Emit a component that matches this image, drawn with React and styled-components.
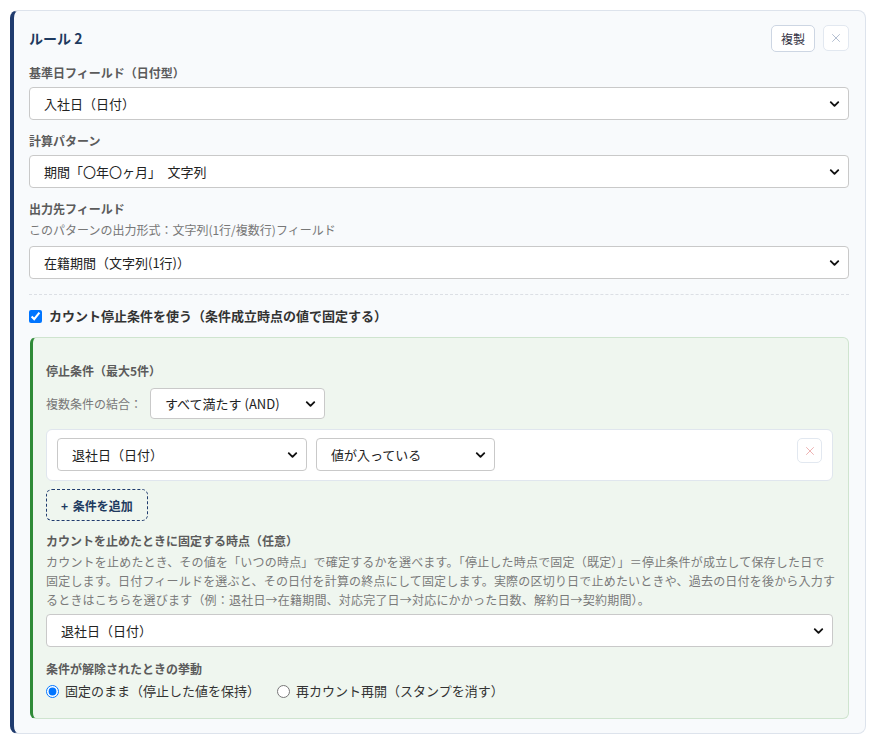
import React from "react";
import styled, { createGlobalStyle } from "styled-components";
import { X, ChevronDown } from "lucide-react";

const GlobalStyle = createGlobalStyle`
  *, *::before, *::after { box-sizing: border-box; }
  body {
    margin: 0;
    background: #ffffff;
    font-family: "Noto Sans CJK JP", "Noto Sans", sans-serif;
    color: #222;
  }
`;

const Page = styled.div`
  padding: 10px;
`;

const RuleCard = styled.section`
  width: 856px;
  background: #f8fafc;
  border: 1px solid #dde3ec;
  border-left: 4px solid #1f3b6e;
  border-radius: 8px;
  padding: 14px 16px 14px 15px;
`;

const Header = styled.div`
  display: flex;
  align-items: center;
  justify-content: space-between;
  height: 27px;
`;

const Title = styled.h3`
  margin: -2px 0 0;
  font-size: 14px;
  font-weight: 700;
  color: #1e3a5f;
`;

const Actions = styled.div`
  display: flex;
  gap: 8px;
`;

const SmallButton = styled.button`
  height: 27px;
  padding: 0 9px;
  background: #fff;
  border: 1px solid #cdd6e3;
  border-radius: 5px;
  font-family: inherit;
  font-size: 12px;
  color: #334;
`;

const IconButton = styled.button`
  width: ${({ size }) => size || 26}px;
  height: ${({ size }) => size || 26}px;
  padding: 0;
  display: flex;
  align-items: center;
  justify-content: center;
  background: #fff;
  border: 1px solid #e2e8f0;
  border-radius: 5px;
  color: ${({ tone }) => tone || "#a3b0c6"};
`;

const Field = styled.div`
  margin-top: ${({ gap }) => gap ?? 12}px;
`;

const Label = styled.div`
  font-size: 12px;
  font-weight: 700;
  color: #5b5b5b;
  line-height: 18px;
  margin-bottom: 5px;
`;

const Hint = styled.div`
  font-size: 12px;
  color: #777;
  line-height: 18px;
  margin-top: -2px;
  margin-bottom: 7px;
`;

const SelectWrap = styled.div`
  position: relative;
  width: ${({ w }) => (w ? `${w}px` : "100%")};
  flex: none;

  svg {
    position: absolute;
    right: 7px;
    top: 50%;
    transform: translateY(-50%);
    pointer-events: none;
    color: #111;
  }
`;

const NativeSelect = styled.select`
  display: block;
  width: 100%;
  height: ${({ h }) => h || 33}px;
  padding: 0 30px 0 14px;
  appearance: none;
  background: #fff;
  border: 1px solid #c9c9c9;
  border-radius: 4px;
  font-family: inherit;
  font-size: 13px;
  color: #222;
`;

const Select = ({ w, h, children, defaultValue }) => (
  <SelectWrap w={w}>
    <NativeSelect h={h} defaultValue={defaultValue}>
      {children}
    </NativeSelect>
    <ChevronDown size={15} strokeWidth={3} />
  </SelectWrap>
);

const Divider = styled.hr`
  margin: 15px 0 0;
  border: none;
  border-top: 1px dashed #dcdfe5;
`;

const CheckRow = styled.label`
  display: flex;
  align-items: center;
  gap: 7px;
  margin-top: 11px;
  font-size: 13px;
  font-weight: 700;
  color: #333;
  line-height: 20px;

  input {
    margin: 0;
    width: 13px;
    height: 13px;
  }
`;

const StopBox = styled.div`
  margin-top: 11px;
  margin-left: 1px;
  background: #eff6ef;
  border: 1px solid #cfe4cf;
  border-left: 3px solid #2f8a37;
  border-radius: 6px;
  padding: 24px 15px 17px 13px;
`;

const SubLabel = styled.div`
  font-size: 12px;
  font-weight: 700;
  color: #5b5b5b;
  line-height: 18px;
`;

const CombineRow = styled.div`
  display: flex;
  align-items: center;
  gap: 8px;
  margin-top: 8px;
  font-size: 12px;
  color: #777;
`;

const ConditionRow = styled.div`
  display: flex;
  align-items: center;
  gap: 9px;
  margin-top: 10px;
  padding: 8px 10px 9px 10px;
  background: #fff;
  border: 1px solid #e0e6ee;
  border-radius: 6px;
`;

const RowSpacer = styled.div`
  flex: 1;
`;

const RemoveWrap = styled.div`
  align-self: flex-start;
`;

const AddButton = styled.button`
  margin-top: 8px;
  height: 32px;
  padding: 0 14px;
  background: transparent;
  border: 1px dashed #1f3b6e;
  border-radius: 6px;
  font-family: inherit;
  font-size: 12px;
  font-weight: 700;
  color: #1e3a5f;
  word-spacing: 2px;
`;

const Block = styled.div`
  margin-top: ${({ gap }) => gap ?? 12}px;
`;

const Desc = styled.p`
  margin: 2px 0 5px;
  font-size: 12px;
  line-height: 19px;
  letter-spacing: 0.2px;
  white-space: nowrap;
  color: #7a7a7a;
`;

const RadioGroup = styled.div`
  display: flex;
  align-items: center;
  gap: 17px;
  margin-top: 3px;
`;

const RadioItem = styled.label`
  display: flex;
  align-items: center;
  gap: 6px;
  font-size: 13px;
  color: #333;
  line-height: 20px;

  input {
    margin: 0;
    width: 13px;
    height: 13px;
  }
`;

const descLines = [
  "カウントを止めたとき、その値を「いつの時点」で確定するかを選べます。「停止した時点で固定（既定）」＝停止条件が成立して保存した日で",
  "固定します。日付フィールドを選ぶと、その日付を計算の終点にして固定します。実際の区切り日で止めたいときや、過去の日付を後から入力す",
  "るときはこちらを選びます（例：退社日→在籍期間、対応完了日→対応にかかった日数、解約日→契約期間）。",
];

export default function App() {
  return (
    <Page>
      <GlobalStyle />
      <RuleCard>
        <Header>
          <Title>ルール 2</Title>
          <Actions>
            <SmallButton>複製</SmallButton>
            <IconButton>
              <X size={14} strokeWidth={1.4} />
            </IconButton>
          </Actions>
        </Header>

        <Field gap={12}>
          <Label>基準日フィールド（日付型）</Label>
          <Select defaultValue="join">
            <option value="join">入社日（日付）</option>
          </Select>
        </Field>

        <Field>
          <Label>計算パターン</Label>
          <Select defaultValue="period">
            <option value="period">期間「〇年〇ヶ月」　文字列</option>
          </Select>
        </Field>

        <Field>
          <Label>出力先フィールド</Label>
          <Hint>このパターンの出力形式：文字列(1行/複数行)フィールド</Hint>
          <Select defaultValue="tenure">
            <option value="tenure">在籍期間（文字列(1行)）</option>
          </Select>
        </Field>

        <Divider />

        <CheckRow>
          <input type="checkbox" defaultChecked />
          カウント停止条件を使う（条件成立時点の値で固定する）
        </CheckRow>

        <StopBox>
          <SubLabel>停止条件（最大5件）</SubLabel>
          <CombineRow>
            複数条件の結合：
            <Select w={175} h={31} defaultValue="and">
              <option value="and">すべて満たす (AND)</option>
            </Select>
          </CombineRow>

          <ConditionRow>
            <Select w={250} defaultValue="leave">
              <option value="leave">退社日（日付）</option>
            </Select>
            <Select w={179} defaultValue="filled">
              <option value="filled">値が入っている</option>
            </Select>
            <RowSpacer />
            <RemoveWrap>
              <IconButton size={25} tone="#e79a9a">
                <X size={14} strokeWidth={1.3} />
              </IconButton>
            </RemoveWrap>
          </ConditionRow>

          <AddButton>+ 条件を追加</AddButton>

          <Block gap={11}>
            <SubLabel>カウントを止めたときに固定する時点（任意）</SubLabel>
            <Desc>
              {descLines.map((line, i) => (
                <React.Fragment key={i}>
                  {line}
                  {i < descLines.length - 1 && <br />}
                </React.Fragment>
              ))}
            </Desc>
            <Select defaultValue="leave">
              <option value="leave">退社日（日付）</option>
            </Select>
          </Block>

          <Block gap={13}>
            <SubLabel>条件が解除されたときの挙動</SubLabel>
            <RadioGroup>
              <RadioItem>
                <input type="radio" name="release" defaultChecked />
                固定のまま（停止した値を保持）
              </RadioItem>
              <RadioItem>
                <input type="radio" name="release" />
                再カウント再開（スタンプを消す）
              </RadioItem>
            </RadioGroup>
          </Block>
        </StopBox>
      </RuleCard>
    </Page>
  );
}
